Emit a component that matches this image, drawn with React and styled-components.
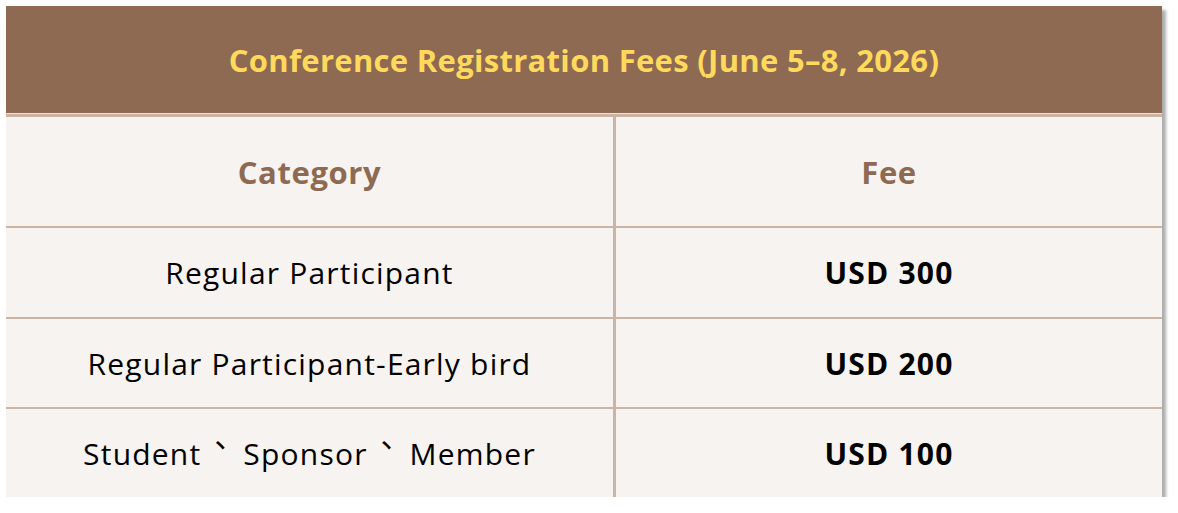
import React from 'react';
import styled, { createGlobalStyle } from 'styled-components';

const GlobalStyle = createGlobalStyle`
  body {
    margin: 0;
    background: #ffffff;
    font-family: "Open Sans", "Noto Sans", "Noto Sans CJK TC", sans-serif;
  }
`;

const Page = styled.div`
  padding: 6px 0 0 6px;
`;

const Table = styled.div`
  width: 1156px;
  display: grid;
  grid-template-columns: 607px 546px;
  grid-template-rows: 109px 109px 89px 88px 88px;
  column-gap: 3px;
  row-gap: 2px;
  background: #c9b4a5;
  box-shadow: 4px 4px 3px rgba(0, 0, 0, 0.32);
`;

const TitleCell = styled.div`
  grid-column: 1 / -1;
  background: #8d6a51;
  color: #ffd95c;
  font-weight: 700;
  font-size: 31px;
  letter-spacing: 0.3px;
  display: flex;
  align-items: center;
  justify-content: center;
  margin-bottom: 1px;
  border-bottom: 1px solid #e9e2dd;
`;

const Cell = styled.div`
  background: #f7f3f0;
  display: flex;
  align-items: center;
  justify-content: center;
  white-space: pre;
  font-size: ${({ $head }) => ($head ? '31px' : '30px')};
  font-weight: ${({ $bold }) => ($bold ? 700 : 400)};
  letter-spacing: ${({ $head }) => ($head ? '0.6px' : '1.2px')};
  color: ${({ $head }) => ($head ? '#8d6a51' : '#000000')};
`;

/* the enumeration comma sits mid-height, centred between the words */
const Sep = styled.span`
  font-family: "Noto Sans CJK TC", sans-serif;
  letter-spacing: 0;
  line-height: 0;
  margin: 0 8px 0 4px;
  vertical-align: 9px;
`;

const rows = [
  [['Regular Participant'], 'USD 300'],
  [['Regular Participant-Early bird'], 'USD 200'],
  [['Student', 'Sponsor', 'Member'], 'USD 100'],
];

export default function App() {
  return (
    <>
      <GlobalStyle />
      <Page>
        <Table>
          <TitleCell>Conference Registration Fees (June 5–8, 2026)</TitleCell>
          <Cell $head $bold>Category</Cell>
          <Cell $head $bold>Fee</Cell>
          {rows.map(([parts, fee]) => (
            <React.Fragment key={fee}>
              <Cell>
                <span>
                  {parts.map((p, i) => (
                    <React.Fragment key={p}>
                      {i > 0 && <Sep>、</Sep>}
                      {p}
                    </React.Fragment>
                  ))}
                </span>
              </Cell>
              <Cell $bold>{fee}</Cell>
            </React.Fragment>
          ))}
        </Table>
      </Page>
    </>
  );
}
